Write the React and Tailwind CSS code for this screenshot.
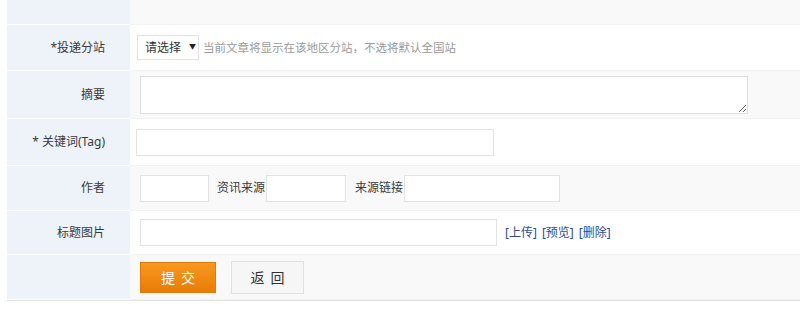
// 文章发布表单 — 投递分站 / 摘要 / 关键词 / 作者 / 标题图片
import React from 'react';

const font = { fontFamily: '"Noto Sans", "Noto Sans CJK SC", sans-serif' };

function Row({ label, h, gray, children }) {
  return (
    <div className={`flex ${h}`}>
      <div className="w-[123px] shrink-0 bg-[#eef2f9] border-b border-white flex items-center justify-end pr-[25px] text-[12px] text-[#3a3a3a]">
        {label}
      </div>
      <div className={`flex-1 flex items-center border-b border-[#f2f2f2] ${gray ? 'bg-[#f9f9f9]' : 'bg-white'}`}>
        {children}
      </div>
    </div>
  );
}

export default function App() {
  return (
    <div className="w-[800px] h-[313px] bg-white pl-[7px]" style={font}>
      <div className="border-b border-[#e2e2e2]">
        <Row h="h-[25px]" gray />

        <Row label="*投递分站" h="h-[46px]">
          <div className="ml-[7px] h-[25px] w-[62px] border border-[#e3e3e3] bg-white flex items-center pl-[7px] text-[12px] text-[#333]">
            请选择
            <span className="ml-[8px] text-[7px] text-[#222]">▼</span>
          </div>
          <span className="ml-[4px] text-[11.5px] text-[#9a9a9a]">当前文章将显示在该地区分站，不选将默认全国站</span>
        </Row>

        <Row label="摘要" h="h-[48px]" gray>
          <textarea className="ml-[10px] w-[608px] h-[38px] border border-[#dedede] bg-white outline-none" />
        </Row>

        <Row label="* 关键词(Tag)" h="h-[47px]">
          <input className="ml-[6px] w-[358px] h-[27px] border border-[#e3e3e3] bg-white outline-none" />
        </Row>

        <Row label="作者" h="h-[45px]" gray>
          <input className="ml-[10px] w-[69px] h-[27px] border border-[#e3e3e3] bg-white outline-none" />
          <span className="ml-[8px] text-[12px] text-[#3a3a3a]">资讯来源</span>
          <input className="ml-[1px] w-[80px] h-[27px] border border-[#e3e3e3] bg-white outline-none" />
          <span className="ml-[9px] text-[12px] text-[#3a3a3a]">来源链接</span>
          <input className="ml-[1px] w-[156px] h-[27px] border border-[#e3e3e3] bg-white outline-none" />
        </Row>

        <Row label="标题图片" h="h-[44px]">
          <input className="ml-[10px] w-[357px] h-[27px] border border-[#e3e3e3] bg-white outline-none" />
          <div className="ml-[8px] flex gap-[5px] text-[12px] text-[#2d4b96]">
            <a>[上传]</a>
            <a>[预览]</a>
            <a>[删除]</a>
          </div>
        </Row>

        <Row h="h-[45px]" gray>
          <button className="ml-[10px] w-[76px] h-[31px] bg-gradient-to-b from-[#f8981d] to-[#e97c05] border border-[#e07a0a] text-white text-[14px] tracking-[6px] pl-[6px]">
            提交
          </button>
          <button className="ml-[15px] w-[73px] h-[33px] bg-[#f6f6f6] border border-[#e0e0e0] text-[#333] text-[14px] tracking-[6px] pl-[6px]">
            返回
          </button>
        </Row>
      </div>
    </div>
  );
}
